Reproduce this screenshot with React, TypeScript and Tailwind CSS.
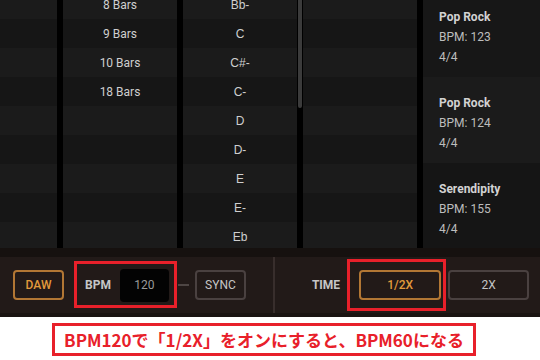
import React from 'react'

// Pattern browser + tempo bar (annotated screenshot)

const BARS = ['8 Bars', '9 Bars', '10 Bars', '18 Bars', '', '', '', '', '']
const CHORDS = ['Bb-', 'C', 'C#-', 'C-', 'D', 'D-', 'E', 'E-', 'Eb']
const EMPTY = ['', '', '', '', '', '', '', '', '']

const PRESETS = [
  { title: 'Pop Rock', bpm: 123, sig: '4/4', bg: 'bg-[#171717]' },
  { title: 'Pop Rock', bpm: 124, sig: '4/4', bg: 'bg-[#1b1b1b]' },
  { title: 'Serendipity', bpm: 155, sig: '4/4', bg: 'bg-[#151515]' },
]

function Column({ items, width, chord }: { items: string[]; width: string; chord?: boolean }) {
  return (
    <div className={`${width} h-full overflow-hidden shrink-0`}>
      <div className="-mt-[10px] flex flex-col">
        {items.map((label, i) => (
          <div
            key={i}
            className={`h-[29px] flex items-center justify-center text-[12px] text-[#cfcfcf] ${
              i % 2 === 0 ? 'bg-[#1b1b1b]' : 'bg-[#161616]'
            } ${chord ? "font-['Liberation_Sans',sans-serif]" : ''}`}
          >
            {label}
          </div>
        ))}
      </div>
    </div>
  )
}

export default function App() {
  return (
    <div className="w-[540px] h-[360px] bg-white overflow-hidden font-['Roboto',sans-serif]">
      {/* Browser columns */}
      <div className="h-[248px] flex bg-black">
        <Column items={EMPTY} width="w-[57px]" />
        <div className="w-[6px] shrink-0" />
        <Column items={BARS} width="w-[114px]" />
        <div className="w-[6px] shrink-0" />
        <Column items={CHORDS} width="w-[114px]" chord />
        {/* scrollbar */}
        <div className="w-[6px] shrink-0 pl-[1px]">
          <div className="w-[4px] h-[108px] rounded-b-full bg-[#3b3b3b]" />
        </div>
        <Column items={EMPTY} width="w-[114px]" />
        <div className="w-[6px] shrink-0" />
        <div className="w-[117px] h-full overflow-hidden shrink-0">
          <div className="-mt-[9px] flex flex-col">
            {PRESETS.map((p, i) => (
              <div key={i} className={`h-[86px] pl-[16px] pt-[16px] flex flex-col ${p.bg}`}>
                <span className="text-[12px] leading-[20px] font-bold text-[#d2d2d2]">{p.title}</span>
                <span className="text-[12px] leading-[20px] text-[#bdbdbd]">BPM: {p.bpm}</span>
                <span className="text-[12px] leading-[20px] text-[#bdbdbd]">{p.sig}</span>
              </div>
            ))}
          </div>
        </div>
      </div>

      {/* Tempo bar */}
      <div className="h-[69px] bg-[#221a18] border-t-[9px] border-b-[4px] border-t-[#16110f] border-b-[#1a1412] flex items-center pl-[13px]">
        <button className="w-[51px] h-[30px] rounded-[4px] border-2 border-[#b27734] text-[12px] font-medium text-[#e29a3c]">
          DAW
        </button>

        <div className="relative ml-[21px] flex items-center">
          <span className="text-[12px] font-bold text-[#c6c6c6]">BPM</span>
          <div className="ml-[9px] w-[49px] h-[33px] rounded-[4px] bg-[#030303] flex items-center justify-center text-[12px] text-[#9a9a9a]">
            120
          </div>
          <div className="absolute -left-[11px] -right-[8px] -top-[8px] -bottom-[6px] border-[3px] border-[#e8202a]" />
        </div>

        <div className="ml-[9px] w-[11px] h-[2px] bg-[#4e4644]" />
        <button className="ml-[6px] w-[51px] h-[30px] rounded-[4px] border-2 border-[#4a4140] text-[12px] text-[#c6c6c6]">
          SYNC
        </button>

        <div className="ml-[27px] w-[2px] self-stretch bg-[#382e2c]" />

        <span className="ml-[37px] text-[12px] font-bold text-[#c6c6c6]">TIME</span>

        <div className="relative ml-[19px]">
          <button className="w-[82px] h-[30px] rounded-[4px] border-2 border-[#b27734] text-[12px] font-medium text-[#e29a3c]">
            1/2X
          </button>
          <div className="absolute -left-[12px] -right-[5px] -top-[11px] -bottom-[11px] border-[3px] border-[#e8202a]" />
        </div>

        <button className="ml-[7px] w-[81px] h-[30px] rounded-[4px] border-2 border-[#4a4140] text-[12px] text-[#c6c6c6]">
          2X
        </button>
      </div>

      {/* Caption */}
      <div className="pt-[6px] pl-[52px]">
        <div className="w-[424px] h-[33px] border-[3px] border-[#e8202a] flex items-center justify-center">
          <span className="text-[17px] font-bold text-[#e8202a] font-['Noto_Sans_CJK_JP',sans-serif] leading-none">
            BPM120で「1/2X」をオンにすると、BPM60になる
          </span>
        </div>
      </div>
    </div>
  )
}
